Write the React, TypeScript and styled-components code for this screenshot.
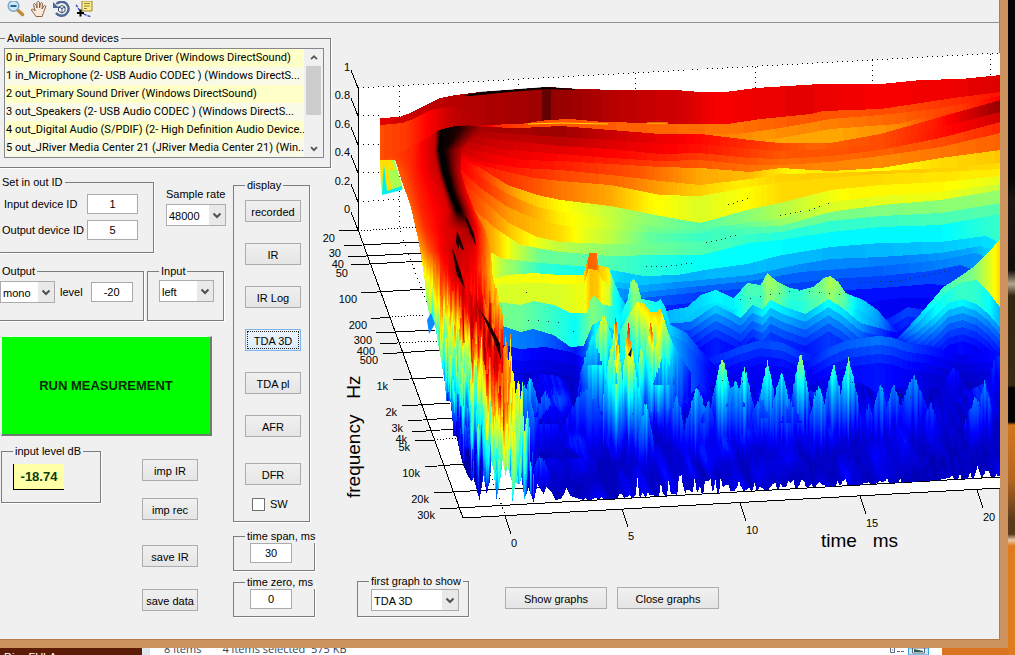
import React from "react";
import styled, { createGlobalStyle, css } from "styled-components";

const GlobalStyle = createGlobalStyle`
  *, *::before, *::after { box-sizing: border-box; }
  body {
    margin: 0;
    background: #d9731f;
    color: #000;
    font: 11px/14px "Liberation Sans", Arial, sans-serif;
  }
  button, input, select { font: inherit; color: inherit; }
`;

/* ---------- window frame ---------- */

const Desktop = styled.div`
  display: grid;
  grid-template-columns: minmax(0, 1fr) 7px;
  grid-template-rows: auto 1fr;
  min-height: 100vh;
  overflow: hidden;
`;

const Wallpaper = styled.div`
  grid-column: 2;
  grid-row: 1 / 3;
  background: linear-gradient(
    #060404 0 180px, #1c1410 200px, #120c08 270px, #b9a78c 284px, #33240f 296px,
    #3c2a12 385px, #050302 388px 422px, #d3761f 425px, #b3661f 480px, #5a3a1c 520px,
    #59391b 534px, #e9c9a8 540px, #e07a1e 546px 100%
  );
`;

const Window = styled.main`
  background: #f0f0f0;
  border: 0 solid #cc935f;
  border-width: 0 8px 8px 0;
  box-shadow: inset -1px -1px 0 #b67a45, 1px 0 0 #a86d3d;
`;

const Toolbar = styled.div`
  display: flex;
  height: 23px;
  padding-left: 5px;
  border-bottom: 1px solid #8f8f8f;
`;

const ToolButton = styled.button`
  width: 23px;
  height: 20px;
  padding: 0;
  border: 0;
  background: none;
  svg { display: block; }
`;

const Body = styled.div`
  display: flex;
  padding-bottom: 23px;
`;

const Controls = styled.section`
  flex: 0 0 332px;
  padding-top: 8px;
`;

const PlotArea = styled.section`
  flex: 1;
  min-width: 0;
`;

/* ---------- layout pieces ---------- */

const Row = styled.div<{ $gap?: number; $top?: number; $left?: number; $align?: string }>`
  display: flex;
  align-items: ${p => p.$align ?? "flex-start"};
  gap: ${p => p.$gap ?? 0}px;
  padding-top: ${p => p.$top ?? 0}px;
  padding-left: ${p => p.$left ?? 0}px;
`;

const Column = styled.div<{ $gap?: number; $top?: number; $width?: number }>`
  display: flex;
  flex-direction: column;
  gap: ${p => p.$gap ?? 0}px;
  padding-top: ${p => p.$top ?? 0}px;
  ${p => p.$width && css`flex: 0 0 ${p.$width}px;`}
`;

const Group = styled.fieldset<{ $width: number; $height: number; $pad?: string; $open?: boolean }>`
  flex: none;
  width: ${p => p.$width}px;
  min-width: 0;
  min-height: ${p => p.$height}px;
  margin: 0;
  padding: ${p => p.$pad ?? "0"};
  border: 1px solid #7d7d7d;
  box-shadow: 1px 1px 0 #fff;
  ${p => p.$open && css`border-left: 0;`}
`;

const Legend = styled.legend<{ $indent?: number }>`
  margin-left: ${p => p.$indent ?? 0}px;
  padding: 0 2px;
  height: 14px;
  white-space: nowrap;
`;

/* ---------- controls ---------- */

const Button = styled.button<{ $width?: number; $gapTop?: number }>`
  flex: none;
  width: ${p => p.$width ?? 56}px;
  height: 22px;
  margin: ${p => p.$gapTop ?? 0}px 0 0;
  padding: 1px 0 0;
  border: 1px solid #acacac;
  background: linear-gradient(#f0f0f0, #e5e5e5);
  white-space: nowrap;
  &[aria-pressed="true"] {
    border-color: #7eb4ea;
    background: linear-gradient(#ecf4fc, #dcecfc);
    outline: 1px dotted #222;
    outline-offset: -3px;
  }
`;

const RunButton = styled.button`
  display: block;
  width: 211px;
  height: 100px;
  margin: 15px 0 8px 1px;
  padding: 0;
  border: 1px solid #e8ffe8;
  border-right: 2px solid #6f7f6f;
  border-bottom: 2px solid #6f7f6f;
  background: #00ff00;
  color: #062c06;
  font-size: 13px;
  font-weight: bold;
`;

const NumberBox = styled.input<{ $width: number }>`
  flex: none;
  width: ${p => p.$width}px;
  height: 20px;
  padding: 0;
  border: 1px solid #ababab;
  background: #fff;
  text-align: center;
`;

const FieldLabel = styled.label<{ $width?: number }>`
  ${p => p.$width && css`width: ${p.$width}px;`}
  white-space: nowrap;
`;

const PickerFrame = styled.span<{ $width: number }>`
  display: grid;
  grid-template-columns: 1fr 16px;
  width: ${p => p.$width}px;
  height: 22px;
  border: 1px solid #acacac;
  background: #fff;
  select {
    grid-area: 1 / 1 / 2 / 3;
    appearance: none;
    width: 100%;
    border: 0;
    padding: 1px 2px 0;
    background: transparent;
  }
  svg {
    grid-area: 1 / 2;
    width: 16px;
    height: 20px;
    background: #e9e9e9;
    pointer-events: none;
  }
`;

const DeviceFrame = styled.div`
  display: flex;
  height: 110px;
  border: 1px solid #828790;
  background: #fff;
`;

const DeviceList = styled.select`
  flex: 1;
  min-width: 0;
  height: 108px;
  padding: 0;
  border: 0;
  outline: 0;
  overflow: hidden;
  background: #fafae6;
  scrollbar-width: none;
  font-family: Roboto, "Liberation Sans", sans-serif;
  option {
    height: 18px;
    min-height: 18px;
    padding: 2px 0 0 1px;
    color: #000;
    background: #fafae8;
  }
  option:nth-child(odd) { background: #ffffc8; }
`;

const ScrollTrack = styled.div`
  display: flex;
  flex-direction: column;
  align-items: center;
  width: 19px;
  background: #f0f0f0;
`;

const ScrollThumb = styled.div`
  width: 15px;
  height: 49px;
  margin-bottom: auto;
  background: #cdcdcd;
`;

const LevelReadout = styled.output`
  display: block;
  width: 51px;
  height: 26px;
  border-left: 1px solid #000;
  border-bottom: 1px solid #000;
  background: #ffffa8;
  color: #0a3c0a;
  font-size: 13px;
  font-weight: bold;
  line-height: 25px;
  text-align: center;
`;

const SwitchLabel = styled.label`
  display: flex;
  align-items: center;
  gap: 5px;
  margin: 12px 0 0 7px;
  input {
    appearance: none;
    width: 13px;
    height: 13px;
    margin: 0;
    border: 1px solid #707070;
    background: #fff;
  }
`;

/* ---------- bottom strip behind the window ---------- */

const StatusStrip = styled.div`
  display: flex;
  height: 7px;
  overflow: hidden;
  background: #d9731f;
`;

const DarkTask = styled.div`
  width: 142px;
  padding: 2px 0 0 4px;
  background: #5c1b05;
  color: #fff;
  overflow: hidden;
`;

const ExplorerStatus = styled.div`
  display: flex;
  align-items: flex-end;
  flex: 0 1 800px;
  border-left: 8px solid #dfe6ee;
  padding-left: 14px;
  gap: 21px;
  background: #fff;
  color: #33435c;
  font-family: "Open Sans", sans-serif;
  line-height: 12px;
  white-space: nowrap;
  svg { margin-left: auto; flex: none; }
`;

function Chevron({ up = false }: { up?: boolean }) {
  return (
    <svg width="16" height="17" viewBox="0 0 16 20" aria-hidden="true">
      <path d={up ? "M4.500 12 8 8.500 11.500 12" : "M4.500 8.500 8 12 11.500 8.500"} fill="none" stroke="#505050" strokeWidth="2" />
    </svg>
  );
}

function Picker({ id, value, width, label }: { id: string; value: string; width: number; label?: string }) {
  return (
    <PickerFrame $width={width}>
      <select id={id} aria-label={label} defaultValue={value}>
        <option>{value}</option>
      </select>
      <Chevron />
    </PickerFrame>
  );
}

/* ---------- waterfall surface ---------- */

type Stop = [number, number];

/** Linear interpolation through [position, value] pairs. */
function lerp(stops: Stop[], x: number): number {
  if (x <= stops[0][0]) return stops[0][1];
  for (let i = 1; i < stops.length; i++) {
    const [x1, y1] = stops[i];
    if (x <= x1) {
      const [x0, y0] = stops[i - 1];
      return y0 + ((y1 - y0) * (x - x0)) / (x1 - x0);
    }
  }
  return stops[stops.length - 1][1];
}

function hash(n: number): number {
  const s = Math.sin(n * 127.1) * 43758.5453;
  return s - Math.floor(s);
}

function noise(x: number, seed: number): number {
  const i = Math.floor(x);
  const f = x - i;
  const a = hash(i + seed * 57);
  const b = hash(i + 1 + seed * 57);
  return a + (b - a) * f * f * (3 - 2 * f);
}

/** Jet colour map; values above 1 run on into black. */
function jet(v: number): string {
  const c = (t: number) => Math.round(255 * Math.max(0, Math.min(1, t)));
  if (v > 1) return `rgb(${c(0.5 - (v - 1) * 6)},0,0)`;
  return `rgb(${c(1.5 - Math.abs(4 * v - 3))},${c(1.5 - Math.abs(4 * v - 2))},${c(1.5 - Math.abs(4 * v - 1))})`;
}

const X0 = 380, X1 = 1000, Y0 = 74, Y1 = 504;
const LEVEL_COUNT = 160;

interface Sheet {
  top: Stop[];
  val: Stop[];
  /** distance over which the value fades going down */
  fade?: number;
  /** number of following contour bands, their spacing and their attenuation */
  steps?: [number, number, number];
}

const XS = [560, 610, 660, 700, 750, 780, 830, 880, 940, 1000];
const band = (left: Stop[], ys: number[], val: Stop[]): Sheet => ({
  top: [...left, ...ys.map((y, i) => [XS[i], y] as Stop)],
  val,
});

const SHEETS: Sheet[] = [
  { top: [[380,118],[399,117],[412,112],[425,105],[440,98],[455,95],[480,92],[520,89],[547,87],[580,89],[620,90],[675,90],[700,92],[725,92],[755,88],[820,84],[880,84],[920,80],[960,79],[1000,75]],
    val: [[380,.9],[400,.92],[440,.94],[541,.97],[542,1.02],[550,1.02],[551,.98],[575,.97],[620,.94],[680,.92],[718,.88],[750,.89],[800,.9],[880,.88],[950,.89],[1000,.91]] },
  { top: [[380,125],[402,123],[415,118],[430,110],[450,106],[470,112],[480,125],[520,124],[547,120],[570,119],[603,122],[650,123],[683,124],[727,124],[760,119],[810,114],[823,111],[880,109],[920,103],[953,98],[1000,92]],
    val: [[380,.8],[405,.82],[425,.87],[450,.93],[472,.95],[482,.93],[496,.84],[530,.8],[640,.78],[730,.76],[800,.79],[900,.8],[970,.84],[1000,.86]] },
  { top: [[700,134],[737,134],[780,128],[830,119],[880,115],[927,110],[967,103],[1000,96]],
    val: [[700,.76],[760,.73],[830,.75],[900,.78],[960,.82],[1000,.88]] },
  { top: [[740,142],[780,138],[830,129],[897,124],[930,116],[960,112],[1000,100]],
    val: [[740,.72],[830,.71],[897,.74],[930,.8],[1000,.9]] },
  band([[380,161],[400,153],[420,142],[437,130],[453,126],[467,125],[483,127],[520,128]], [126,130,134,134,140,143,143,134,117,100],
    [[380,.8],[430,.88],[460,.97],[500,.96],[560,.97],[620,.92],[690,.875],[750,.83],[810,.78],[880,.8],[935,.85],[960,.9],[1000,.98]]),
  band([[450,129],[500,133]], [137,140,144,144,149,151,149,144,127,112],
    [[450,.97],[500,.94],[560,.94],[620,.9],[700,.86],[780,.79],[880,.8],[940,.86],[1000,.92]]),
  band([[450,133],[500,140]], [146,149,154,153,158,159,156,150,138,122],
    [[450,.96],[500,.92],[560,.9],[620,.87],[700,.82],[780,.77],[880,.78],[940,.8],[1000,.84]]),
  band([[450,138],[500,149]], [154,158,161,160,165,165,162,156,147,133],
    [[450,.95],[500,.9],[560,.87],[620,.84],[700,.79],[780,.75],[880,.74],[1000,.78]]),
  band([[450,143],[490,154],[520,160]], [161,164,167,168,172,168,171,168,158,150],
    [[450,.94],[500,.88],[560,.85],[640,.79],[700,.71],[750,.69],[790,.63],[830,.65],[880,.62],[940,.66],[1000,.68]]),
  band([[450,147],[487,163],[520,168]], [170,175,181,185,179,174,173,171,168,163],
    [[450,.93],[490,.87],[560,.81],[620,.77],[690,.68],[740,.64],[780,.67],[880,.68],[1000,.66]]),
  band([[450,150],[487,167],[533,178]], [181,185,195,196,187,182,178,174,172,169],
    [[450,.92],[487,.85],[530,.8],[560,.76],[610,.71],[650,.63],[665,.62],[700,.59],[740,.62],[780,.66],[880,.66],[940,.65],[1000,.64]]),
  band([[450,152],[480,168],[507,185],[537,195]], [200,206,216,223,209,203,190,185,182,176],
    [[450,.92],[480,.83],[520,.7],[560,.63],[600,.58],[650,.51],[700,.46],[740,.5],[780,.55],[820,.6],[850,.63],[940,.63],[1000,.6]]),
  band([[450,155],[480,177],[507,194],[537,207]], [212,218,228,230,222,219,202,196,192,184],
    [[450,.9],[480,.84],[510,.76],[560,.64],[600,.59],[650,.49],[720,.44],[780,.52],[830,.59],[940,.61],[1000,.57]]),
  band([[450,160],[480,188],[507,207],[537,220]], [225,230,233,233,227,226,212,205,200,190],
    [[450,.9],[480,.8],[510,.72],[560,.66],[585,.6],[610,.56],[650,.47],[700,.43],[780,.46],[830,.49],[940,.51],[1000,.52]]),
  band([[450,170],[480,198],[507,222],[537,237]], [242,244,243,241,234,232,221,216,213,203],
    [[450,.88],[480,.79],[510,.68],[540,.6],[560,.56],[610,.51],[700,.45],[780,.41],[880,.43],[1000,.46]]),
  band([[450,185],[475,210],[493,227],[520,245]], [252,256,255,255,243,240,232,227,225,214],
    [[450,.87],[475,.78],[493,.7],[515,.58],[540,.48],[600,.46],[640,.42],[700,.38],[800,.37],[940,.37],[1000,.43]]),
  { top: [[470,240],[500,258],[530,262],[600,268],[643,276],[677,275],[710,269],[747,264],[777,256],[830,247],[880,243],[940,242],[985,236],[1000,243]],
    val: [[470,.75],[500,.56],[540,.42],[600,.38],[620,.33],[680,.3],[760,.31],[850,.3],[940,.32],[1000,.35]] },
  { top: [[600,280],[643,285],[700,280],[750,275],[800,264],[830,259],[880,257],[940,253],[980,246],[1000,252]], val: [[600,.32],[680,.26],[800,.26],[900,.25],[970,.29],[1000,.35]] },
  { top: [[600,285],[643,292],[700,286],[750,281],[800,272],[880,266],[940,260],[975,253],[1000,262]], val: [[600,.28],[700,.22],[880,.22],[1000,.28]] },
  { top: [[620,300],[700,292],[760,287],[830,279],[880,276],[930,271],[960,265],[1000,280]], val: [[600,.24],[700,.18],[900,.19],[1000,.2]] },
  { top: [[620,310],[700,302],[760,296],[830,291],[880,288],[930,284],[1000,290]], val: [[600,.2],[700,.14],[900,.14],[1000,.13]] },
  { top: [[860,305],[880,300],[905,298],[930,298],[960,300]], val: [[860,.11],[960,.11]] },
  { top: [[870,325],[893,316],[907,307],[925,310],[950,325]], val: [[870,.12],[905,.19],[950,.15]], steps: [2, 9, .85] },
  { top: [[650,318],[670,310],[687,307],[700,295],[715,290],[727,295],[733,298],[747,283],[760,285],[767,273],[777,282],[790,288],[800,290],[813,287],[823,278],[830,276],[838,282],[845,293],[863,300],[877,310],[893,328],[900,336],[1000,345]],
    val: [[650,.28],[700,.34],[715,.37],[733,.36],[747,.45],[760,.44],[767,.54],[777,.5],[790,.42],[800,.42],[823,.5],[830,.55],[842,.48],[855,.36],[877,.28],[893,.16],[1000,.1]], steps: [1, 12, .96] },
  { top: [[650,325],[690,322],[715,305],[728,311],[740,318],[752,305],[762,309],[770,300],[785,307],[805,314],[828,299],[842,308],[860,323],[893,332],[1000,350]],
    val: [[650,.2],[690,.22],[715,.32],[740,.26],[767,.38],[780,.36],[805,.3],[828,.38],[845,.34],[870,.22],[893,.12],[1000,.09]], steps: [4, 8, .83] },
  { top: [[895,340],[903,332],[917,317],[930,302],[943,287],[957,278],[973,267],[987,253],[999,240]], val: [[895,.15],[903,.22],[917,.32],[930,.38],[945,.44],[957,.47],[973,.5],[987,.58],[999,.66]] },
  { top: [[897,341],[915,325],[932,307],[948,290],[962,282],[976,280],[988,292],[1000,308]], val: [[897,.15],[915,.27],[935,.37],[960,.43],[975,.42],[988,.38],[1000,.3]] },
  { top: [[899,343],[918,331],[935,316],[948,303],[962,299],[976,304],[988,314],[1000,328]], val: [[899,.14],[918,.24],[940,.35],[962,.37],[980,.32],[1000,.25]], steps: [6, 7, .84] },
  { top: [[680,365],[720,354],[740,346],[760,340],[783,343],[800,352],[830,355]], val: [[680,.12],[740,.19],[783,.2],[830,.12]], steps: [3, 8, .84] },
  { top: [[800,365],[830,347],[847,340],[877,336],[890,337],[907,343],[930,346],[960,355],[1000,352]], val: [[800,.12],[830,.2],[877,.24],[907,.19],[960,.1],[1000,.14]], steps: [3, 9, .84] },
  { top: [[480,295],[488,281],[507,275],[533,273],[560,275],[583,275],[587,260],[589,253],[596,253],[598,265],[608,268],[613,280],[620,297],[627,307],[632,298],[640,350],[690,375]],
    val: [[480,.65],[500,.61],[583,.63],[588,.78],[596,.77],[599,.68],[608,.64],[614,.4],[627,.3],[650,.1]] },
  { top: [[480,296],[488,290],[500,284],[533,283],[565,284],[584,283],[588,269],[597,270],[602,280],[609,285],[613,292]],
    val: [[480,.62],[500,.59],[560,.59],[584,.61],[590,.69],[597,.68],[602,.62],[609,.58],[613,.4]] },
  { top: [[480,300],[497,302],[520,305],[533,301],[553,305],[570,313],[587,313],[590,300],[593,295],[603,305],[612,306],[620,315],[627,307],[633,318],[660,360]], val: [[480,.5],[520,.48],[550,.43],[575,.38],[592,.5],[603,.46],[612,.4],[625,.35],[650,.1]] },
  { top: [[490,325],[502,326],[520,332],[533,329],[553,335],[570,347],[583,346],[592,325],[600,320],[640,350]], val: [[490,.27],[540,.23],[560,.19],[575,.14],[585,.2],[595,.38],[620,.3],[650,.1]] },
  { top: [[490,342],[520,349],[545,347],[570,352],[582,357],[600,345],[620,370]], val: [[490,.16],[540,.12],[575,.1],[590,.2],[620,.15]], steps: [4, 12, .82] },
  { top: [[620,315],[627,300],[630,282],[633,279],[637,284],[641,299],[648,300],[656,302],[660,299],[665,308],[670,325],[685,332],[700,350],[715,366]],
    val: [[620,.36],[628,.42],[633,.54],[638,.5],[644,.42],[650,.4],[660,.37],[668,.34],[690,.22],[715,.1]], steps: [1, 10, .95] },
  { top: [[620,330],[630,312],[637,302],[643,303],[650,312],[657,312],[659,307],[662,314],[667,330],[673,345],[690,372]],
    val: [[620,.42],[634,.6],[640,.66],[650,.66],[660,.68],[667,.52],[673,.34],[690,.14]], fade: 130 },
];

/** Narrow peaks: x, top, half width, value, fade length. */
const PEAKS: number[][] = [
  [603,313,16,.6,140],[592,332,12,.42,110],[615,314,4,.9,110],[617,338,6,.72,130],[628,322,5,.94,120],[631,345,7,.7,120],[611,345,8,.6,130],
  [650,322,5,.86,80],[656,342,9,.62,100],[641,345,6,.58,110],[664,352,14,.4,110],[645,400,7,.36,90],[638,385,8,.42,100],[585,385,22,.25,100],
  [697,385,12,.34,100],[722,355,10,.5,110],[744,366,9,.43,105],[735,378,12,.34,95],[767,360,8,.47,105],[781,370,10,.4,105],
  [800,350,8,.56,110],[818,383,10,.36,95],[833,362,9,.44,105],[848,357,9,.47,105],[880,382,9,.3,90],[893,383,10,.29,85],
  [913,373,14,.28,95],[953,364,14,.15,70],[975,395,11,.25,75],[984,380,8,.28,85],[998,353,16,.18,95],[930,400,9,.2,75],
  [676,394,8,.3,85],[868,403,8,.2,65],[708,400,10,.24,75],[760,395,12,.26,75],[790,400,14,.25,75],
  [530,375,10,.34,100],[524,382,12,.34,110],[545,390,14,.24,90],[552,400,18,.15,80],[540,450,9,.22,60],[560,440,30,.1,60],
];

const RIDGE_Y = [120,150,170,190,210,230,250,270,300,330,360,390,420,450,480,504];
/** Colour profile across the steep left slope, one row for each RIDGE_Y. */
const RIDGE: Stop[][] = [
  [[380,.8],[412,.84],[434,.92],[442,1.09],[466,1.05],[488,.97]],
  [[380,.8],[412,.84],[434,.93],[438,1.08],[443,1.08],[460,.95]],
  [[397,.78],[412,.84],[437,.93],[442,1.08],[447,1.08],[460,.92]],
  [[404,.78],[417,.84],[443,.92],[448,1.08],[452,1.08],[466,.88]],
  [[410,.77],[421,.84],[448,.91],[456,1.08],[460,1.08],[474,.84]],
  [[415,.75],[425,.83],[444,.9],[460,.93],[469,.97],[485,.77]],
  [[419,.7],[428,.79],[441,.88],[455,.94],[474,.9],[490,.72]],
  [[422,.63],[430,.7],[441,.82],[455,.93],[474,.88],[492,.68]],
  [[426,.52],[436,.6],[449,.74],[463,.92],[480,.85],[499,.68]],
  [[434,.42],[441,.48],[453,.6],[467,.88],[488,.93],[507,.74]],
  [[440,.36],[447,.43],[459,.54],[474,.74],[496,.91],[514,.66]],
  [[446,.24],[452,.34],[465,.48],[482,.61],[500,.82],[520,.58]],
  [[452,.14],[459,.22],[471,.4],[488,.55],[504,.64],[526,.46]],
  [[457,.08],[465,.12],[478,.32],[494,.46],[510,.52],[530,.35]],
  [[468,.06],[474,.08],[485,.14],[499,.32],[513,.34],[533,.2]],
  [[480,.04],[484,.06],[490,.1],[500,.2],[512,.22],[535,.1]],
];

const BOTTOM: Stop[] = [
  [463,466],[468,477],[471,481],[473,478],[479,500],[483,476],[486,493],[489,483],[491,462],[493,470],[496,499],[500,478],[502,461],[505,475],[507,466],[511,480],[512,501],[515,483],
  [519,484],[521,478],[524,499],[528,488],[533,502],[537,484],[540,489],[543,494],[546,487],[551,492],[555,500],[560,499],[563,495],[566,488],[570,496],[576,498],[583,500],
];

function bottomAt(x: number): number {
  if (x < 583) return lerp(BOTTOM, x);
  const base = 500.5 - (x - 580) * 0.0555;
  const n = noise(x / 2.6, 71);
  const amp = lerp([[583,4],[630,5],[637,20],[715,20],[740,10],[830,9],[900,5],[930,8],[1000,9]], x);
  const spike = Math.abs(x - 681) < 4 ? 16 - Math.abs(x - 681) * 4 : Math.abs(x - 977) < 4 ? 12 - Math.abs(x - 977) * 3 : 0;
  return base - Math.max(spike, Math.pow(n, 2.5) * amp);
}

/** Left outline of the body: [y, x]. */
const LEFT: Stop[] = [[118,380],[159,380],[160,395],[180,401],[205,410],[240,418],[278,424],[300,426],[316,429],[322,434],[345,438],[380,444],[400,446],[401,450],[420,452],[435,453],[436,456],[450,459],[466,463],[504,470]];

function buildSurface(): { color: string; d: string }[] {
  const w = X1 - X0, h = Y1 - Y0;
  const field: Float32Array[] = Array.from({ length: w }, () => new Float32Array(h).fill(-1));
  const paint = (s: Sheet, dy: number, k: number) => {
    const last = s.top[s.top.length - 1][0];
    for (let x = Math.max(X0, s.top[0][0]); x < Math.min(X1, last + 1); x++) {
      const y = Math.round(lerp(s.top, x) + dy);
      const v = lerp(s.val, x) * k;
      if (s.fade) {
        const jag = (noise(x / 1.6, 91) - 0.5) * 0.22;
        for (let yy = y; yy < Y1; yy++) {
          const q = (yy - y) / s.fade;
          field[x - X0][yy - Y0] = Math.max(0.05, v * (1 - q * 0.95 + jag * Math.min(1, q * 5)));
        }
      } else {
        field[x - X0].fill(Math.max(0.04, v), Math.max(0, y - Y0));
      }
    }
  };
  SHEETS.forEach(s => {
    paint(s, 0, 1);
    if (s.steps) for (let i = 1; i <= s.steps[0]; i++) paint(s, i * s.steps[1], Math.pow(s.steps[2], i));
  });

  // deep blue foreground, with slanting ripples
  for (let x = 500; x < X1; x++) {
    const start = lerp([[500,368],[580,372],[600,405],[680,400],[700,380],[1000,380]], x) + noise(x / 22, 5) * 14;
    for (let y = Math.round(start); y < Y1; y++) {
      const ripple = noise((x - (y - 380) * 0.38) / 9, 9) * noise((x + y * 1.6) / 40, 12);
      const grain = noise((x - (y - 380) * 0.2) / 2.5, 3 + Math.floor((y + hash(x) * 9) / 11));
      const depth = Math.max(0, (y - 400) / 100);
      const value = 0.045 + ripple * 0.15 * (1 - depth * 0.3) + grain * 0.05 * (1 - depth * 0.6);
      const col = field[x - X0];
      col[y - Y0] = x > 598 && x < 682 ? Math.max(value, col[y - Y0] * Math.max(0, 1 - depth)) : value;
    }
  }

  // narrow peaks
  PEAKS.forEach(([cx, top, hw, v, fade], index) => {
    for (let x = Math.max(X0, cx - hw * 2); x < Math.min(X1, cx + hw * 2); x++) {
      const t = Math.abs(x - cx) / hw;
      const edge = top + (t < 1 ? Math.pow(t, 1.2) * fade * 0.36 : fade * (0.36 + (t - 1) * 0.6)) + hash(x * 3 + index) * 5;
      for (let y = Math.round(edge); y < Math.min(top + fade, Y1); y++) {
        const q = (y - top) / fade;
        const jag = (noise(x / 1.8, index + 30) - 0.5) * 0.26;
        const value = v * Math.max(0, 1 - q * 1.05 + jag) * (1 - t * 0.22);
        const col = field[x - X0];
        if (value > col[y - Y0] || (q < 0.3 && t < 0.8)) col[y - Y0] = Math.max(value, 0.05);
      }
    }
  });

  // steep left slope
  for (let y = 125; y < Y1; y++) {
    for (let x = X0; x < 540; x++) {
      const rough = Math.max(0, Math.min(1, (y - 250) / 90));
      const shifted = y + ((noise(x / 1.7, 44) - 0.5) * 56 + (noise(x / 4, 46) - 0.5) * 30) * rough;
      let i = 0;
      while (i < RIDGE_Y.length - 2 && shifted > RIDGE_Y[i + 1]) i++;
      const t = Math.max(0, Math.min(1, (shifted - RIDGE_Y[i]) / (RIDGE_Y[i + 1] - RIDGE_Y[i])));
      const row = RIDGE[i].map(([px, pv], k) => {
        const [qx, qv] = RIDGE[i + 1][k];
        return [px + (qx - px) * t, pv + (qv - pv) * t] as Stop;
      });
      const right = row[row.length - 1][0];
      if (y < lerp(SHEETS[4].top, x) || x > right) continue;
      const streak = (noise(x / 1.3, 60 + Math.floor((y + hash(x) * 20) / 22)) - 0.5) * 0.17 * rough;
      field[x - X0][y - Y0] = Math.max(0.03, lerp(row, x) + streak);
    }
  }

  // merge equal neighbours of each column into vertical runs, grouped by colour
  const runs = new Map<number, string[]>();
  for (let x = X0; x < X1; x++) {
    const floor = Math.round(bottomAt(x));
    let start = -1, current = -1;
    for (let y = Y0; y <= Y1; y++) {
      const raw = y < Y1 ? field[x - X0][y - Y0] : -1;
      const visible = raw >= 0 && y < floor && x >= lerp(LEFT, y);
      const level = visible ? Math.round(raw * LEVEL_COUNT) : -1;
      if (level !== current) {
        if (current >= 0) {
          if (!runs.has(current)) runs.set(current, []);
          runs.get(current)!.push(`M${x} ${start}h1v${y - start}h-1z`);
        }
        current = level;
        start = y;
      }
    }
  }
  return [...runs].map(([level, parts]) => ({ color: jet(level / LEVEL_COUNT), d: parts.join("") }));
}

const SURFACE = buildSurface();

const AxisText = styled.text`
  font: 11px "Liberation Sans", Arial, sans-serif;
  fill: #000;
`;

const AxisTitle = styled.text`
  font: 19px "Liberation Sans", Arial, sans-serif;
  white-space: pre;
  fill: #000;
`;

const Plot = styled.svg`
  display: block;
  width: 100%;
  height: auto;
  overflow: visible;
`;

const LEVELS: [string, number][] = [["1", 88], ["0.8", 116], ["0.6", 145], ["0.4", 173], ["0.2", 202], ["0", 230]];

/** label, label x and y, tick start, tick end */
const FREQUENCIES: [string, number, number, number, number, number, number][] = [
  ["20", 335, 242, 339, 231, 358, 230],
  ["30", 341, 257, 344, 246, 419, 242],
  ["40", 344, 268, 348, 257, 422, 253],
  ["50", 348, 277, 351, 265, 424, 261],
  ["100", 357, 303, 361, 293, 426, 289],
  ["200", 367, 329, 371, 319, 389, 317],
  ["300", 372, 344, 376, 333, 435, 330],
  ["400", 375, 355, 380, 344, 397, 343],
  ["500", 378, 364, 383, 354, 439, 350],
  ["1k", 388, 390, 393, 380, 443, 377],
  ["2k", 397, 416, 402, 406, 450, 403],
  ["3k", 403, 432, 408, 421, 452, 418],
  ["4k", 407, 443, 412, 432, 455, 429],
  ["5k", 410, 451, 415, 441, 434, 440],
  ["10k", 420, 477, 425, 467, 463, 464],
  ["20k", 429, 503, 434, 493, 560, 486],
  ["30k", 435, 519, 440, 509, 1000, 477],
];

const TIMES: [string, number, number][] = [["0", 505, 516], ["5", 622, 509], ["10", 740, 503], ["15", 860, 496], ["20", 977, 490]];

function Waterfall() {
  return (
    <Plot viewBox="332 23 668 537" role="img" aria-label="Time and frequency decay plot">
      <path d="M358 88 1000 53V488L463 518 358 231Z" fill="#fff" />
      <g fill="none" stroke="#000" shapeRendering="crispEdges">
        <path
          strokeDasharray="1 4"
          d="M358 88 1000 53M399 86V228L506 517M518 79V92M635 73V92M755 67V90M872 60V85M990 54V76M358 116 382 115M358 145 382 144M358 173 382 172M358 202 402 199"
        />
        <path strokeDasharray="1 2" d="M358 231 416 227M389 317 424 315M397 343 438 341M434 440 457 438" />
        <path d="M358.500 88V231L463 518 1000 488" />
        {LEVELS.map(([label, y]) => <path key={label} d={`M351 ${y - 18}L358 ${y}`} />)}
        {FREQUENCIES.map(f => <path key={f[0]} d={`M${f[3]} ${f[4]}L${f[5]} ${f[6]}`} />)}
        {TIMES.map(([label, x, y]) => <path key={label} d={`M${x} ${y}l6 18`} />)}
      </g>
      <path d="M380 160 390 157 394 158 403 189 382 194Z" fill="#a8ff50" />
      <path d="M380 160 390 156 395 170 388 170 392 190 388 192 384 166 381 190Z" fill="#ffe000" />
      <path d="M384 165 387 191 402 186V190L382 195 383 176Z" fill="#00f0f0" />
      <g shapeRendering="crispEdges">
        {SURFACE.map(s => <path key={s.color} d={s.d} fill={s.color} />)}
      </g>
      <path d="M427 320 429 334 435 324 431 313Z" fill="#0a8cff" />
      <path d="M463 95 480 92 520 89 547 87 575 89V90L547 89 510 92 470 96Z" fill="#080000" />
      <path d="M464 214 468 220 474 234 476 246 470 233ZM457 231 460 238 464 249 462 250 459 244 459 249 456 243ZM452 248 455 255 461 273 465 289 457 275ZM480 310 490 324 500 344 501 360 494 340Z" fill="#1a0000" />
      <path d="M463 310 464 343M471 318 472 362M477 300 481 330M491 303 491 328" stroke="#b00000" fill="none" />
      <path d="M628 355 632 347 631 357Z" fill="#001060" />
      <path d="M528 124 560 123 608 124M647 123 668 123" stroke="#ffd800" fill="none" />
      <g fill="none" stroke="#10304a" strokeDasharray="1 4" shapeRendering="crispEdges">
        <path d="M728 205 752 197M780 216 810 210 830 203M706 243 738 235M646 266 668 266 694 263M860 283 898 281 930 274 950 270" />
        <path strokeDasharray="1 9" d="M526 293 532 290M528 320 560 323M573 332 582 331M740 300 800 290 840 295M722 380 760 383M842 380 920 400" />
      </g>
      {LEVELS.map(([label, y]) => (
        <AxisText key={label} x="350" y={y - 17} textAnchor="end">{label}</AxisText>
      ))}
      {FREQUENCIES.map(f => (
        <AxisText key={f[0]} x={f[1]} y={f[2]} textAnchor="end">{f[0]}</AxisText>
      ))}
      {TIMES.map(([label, x, y]) => (
        <AxisText key={label} x={x + 6} y={y + 31}>{label}</AxisText>
      ))}
      <AxisTitle x="821" y="547">{"time   ms"}</AxisTitle>
      <AxisTitle transform="translate(360 498) rotate(-90)">{"frequency   Hz"}</AxisTitle>
    </Plot>
  );
}

/* ---------- toolbar icons ---------- */

function ZoomOutIcon() {
  return (
    <svg width="22" height="18" viewBox="0 0 22 18" aria-hidden="true">
      <path d="m12.500 9 5 4.500" stroke="#c58b3a" strokeWidth="3.500" strokeLinecap="round" />
      <circle cx="8.500" cy="5" r="5.300" fill="#cfe9f7" stroke="#7aa7c4" strokeWidth="1.500" />
      <path d="M5.500 5h6" stroke="#24649c" strokeWidth="2" />
    </svg>
  );
}

function HandIcon() {
  return (
    <svg width="22" height="18" viewBox="0 0 22 18" aria-hidden="true">
      <path
        d="M8 15.500C6 12 3.500 10.500 3.500 8.500c1-1 2.500 0 3.500 1.500L5.500 3.500c.5-1.500 2-1 2.500.5L9 7V1.500c.5-1.500 2-1.500 2.500 0V7l1-4.500c.5-1.500 2-1 2 .5L14 8l1.800-3c1-1 2.200-.3 1.900 1L16 10c-.4 2.500-1.500 3.500-1.800 5.500Z"
        fill="#fbe9d8" stroke="#8a6248" strokeWidth="1"
      />
    </svg>
  );
}

function RotateIcon() {
  return (
    <svg width="22" height="18" viewBox="0 0 22 18" aria-hidden="true">
      <path d="M5.500 3A7 7 0 1 1 5 12" fill="none" stroke="#4d6795" strokeWidth="2.400" />
      <path d="M2 1v6h6Z" fill="#4d6795" />
      <path d="m7.500 6 3.500-1.500L14 6v4l-3 2-3.500-2Zm0 0L11 7.500 14 6m-3 1.500V12" fill="#fff" stroke="#3c4e70" />
    </svg>
  );
}

function DataTipIcon() {
  return (
    <svg width="22" height="18" viewBox="0 0 22 18" aria-hidden="true">
      <path d="M2 4c3 3 3 9 15 11.500" fill="none" stroke="#2a35c8" strokeWidth="1.300" strokeDasharray="3 1" />
      <path d="M8 0h10v10H8Z" fill="#ffee8a" stroke="#9a8434" />
      <path d="M10 2.500h6M10 5h6M10 7.500h3" stroke="#8c8038" />
      <path d="M3 12h7M6.500 8.500v7" stroke="#000" strokeWidth="2" />
    </svg>
  );
}

const DEVICES = [
  "0 in_Primary Sound Capture Driver (Windows DirectSound)",
  "1 in_Microphone (2- USB Audio CODEC ) (Windows DirectS...",
  "2 out_Primary Sound Driver (Windows DirectSound)",
  "3 out_Speakers (2- USB Audio CODEC ) (Windows DirectS...",
  "4 out_Digital Audio (S/PDIF) (2- High Definition Audio Device...",
  "5 out_JRiver Media Center 21 (JRiver Media Center 21) (Win...",
];

const DISPLAYS = ["recorded", "IR", "IR Log", "TDA 3D", "TDA pl", "AFR"];

export default function App() {
  return (
    <>
      <GlobalStyle />
      <Desktop>
        <Window>
          <Toolbar>
            <ToolButton aria-label="Zoom out"><ZoomOutIcon /></ToolButton>
            <ToolButton aria-label="Pan"><HandIcon /></ToolButton>
            <ToolButton aria-label="Rotate 3D"><RotateIcon /></ToolButton>
            <ToolButton aria-label="Data cursor"><DataTipIcon /></ToolButton>
          </Toolbar>
          <Body>
            <Controls>
              <Group $width={331} $height={137} $pad="3px 6px 0 4px" $open>
                <Legend $indent={1}>Avilable sound devices</Legend>
                <DeviceFrame>
                  <DeviceList size={6} aria-label="Avilable sound devices">
                    {DEVICES.map(d => <option key={d}>{d}</option>)}
                  </DeviceList>
                  <ScrollTrack>
                    <Chevron up />
                    <ScrollThumb />
                    <Chevron />
                  </ScrollTrack>
                </DeviceFrame>
              </Group>

              <Row $gap={7} $top={7}>
                <Column $width={226}>
                  <Row $gap={12}>
                    <Group $width={154} $height={78} $pad="5px 0 0" $open>
                      <Legend>Set in out ID</Legend>
                      <Column $gap={6}>
                        <Row $left={4} $align="center">
                          <FieldLabel htmlFor="in-id" $width={83}>Input device ID</FieldLabel>
                          <NumberBox id="in-id" $width={51} defaultValue="1" />
                        </Row>
                        <Row $left={2} $align="center">
                          <FieldLabel htmlFor="out-id" $width={85}>Output device ID</FieldLabel>
                          <NumberBox id="out-id" $width={51} defaultValue="5" />
                        </Row>
                      </Column>
                    </Group>
                    <Column $top={12} $gap={3}>
                      <FieldLabel htmlFor="rate">Sample rate</FieldLabel>
                      <Picker id="rate" value="48000" width={60} />
                    </Column>
                  </Row>

                  <Row $gap={3} $top={11}>
                    <Group $width={144} $height={57} $pad="3px 0 0" $open>
                      <Legend>Output</Legend>
                      <Row $align="center">
                        <Picker id="out-mode" value="mono" width={55} label="Output" />
                        <Row $left={5} $gap={8} $align="center">
                          <FieldLabel htmlFor="level">level</FieldLabel>
                          <NumberBox id="level" $width={42} defaultValue="-20" />
                        </Row>
                      </Row>
                    </Group>
                    <Group $width={77} $height={57} $pad="2px 0 0 11px">
                      <Legend>Input</Legend>
                      <Picker id="in-mode" value="left" width={55} label="Input" />
                    </Group>
                  </Row>

                  <RunButton>RUN MEASUREMENT</RunButton>

                  <Row $gap={41} $left={1}>
                    <Group $width={100} $height={59} $pad="6px 0 0 11px">
                      <Legend>input level dB</Legend>
                      <LevelReadout>-18.74</LevelReadout>
                    </Group>
                    <Column $top={15}>
                      <Button>imp IR</Button>
                      <Button $gapTop={17}>imp rec</Button>
                      <Button $gapTop={25}>save IR</Button>
                      <Button $gapTop={22}>save data</Button>
                    </Column>
                  </Row>
                </Column>

                <Column $width={82} $top={3}>
                  <Group $width={77} $height={344} $pad="8px 0 0 11px">
                    <Legend>display</Legend>
                    <Column $gap={21}>
                      {DISPLAYS.map(d => (
                        <Button key={d} aria-pressed={d === "TDA 3D"}>{d}</Button>
                      ))}
                      <Button $gapTop={5}>DFR</Button>
                    </Column>
                    <SwitchLabel><input type="checkbox" />SW</SwitchLabel>
                  </Group>
                  <Column $top={7} $gap={4}>
                    <Group $width={82} $height={42} $pad="0 0 0 16px">
                      <Legend $indent={-5}>time span, ms</Legend>
                      <NumberBox $width={42} aria-label="time span, ms" defaultValue="30" />
                    </Group>
                    <Group $width={82} $height={42} $pad="0 0 0 16px">
                      <Legend $indent={-5}>time zero, ms</Legend>
                      <NumberBox $width={42} aria-label="time zero, ms" defaultValue="0" />
                    </Group>
                  </Column>
                </Column>
              </Row>
            </Controls>

            <PlotArea>
              <Waterfall />
              <Row $left={25} $top={14}>
                <Group $width={112} $height={43} $pad="1px 0 0 13px">
                  <Legend $indent={-2}>first graph to show</Legend>
                  <Picker id="first" value="TDA 3D" width={88} label="first graph to show" />
                </Group>
                <Row $left={36} $top={13} $gap={10}>
                  <Button $width={102}>Show graphs</Button>
                  <Button $width={102}>Close graphs</Button>
                </Row>
              </Row>
            </PlotArea>
          </Body>
        </Window>

        <StatusStrip>
          <DarkTask>Disc FULA</DarkTask>
          <ExplorerStatus>
            <span>8 items</span>
            <span>4 items selected&nbsp; 575 KB</span>
            <svg width="53" height="7" viewBox="0 0 53 7" aria-hidden="true">
              <path d="M1.500 0v4.500h4V0M3 2h1M8 3.500h3M12 3.500h3" fill="none" stroke="#5b6a80" />
              <path d="M19.500 0h20v7h-20Z" fill="#cde8f8" stroke="#3aa0d8" />
              <path d="M23.500 0h12v5h-12Z" fill="#fff" stroke="#5b6a80" />
              <path d="m25 1 9 2v1h-9Z" fill="#28604c" />
            </svg>
          </ExplorerStatus>
        </StatusStrip>
        <Wallpaper />
      </Desktop>
    </>
  );
}
